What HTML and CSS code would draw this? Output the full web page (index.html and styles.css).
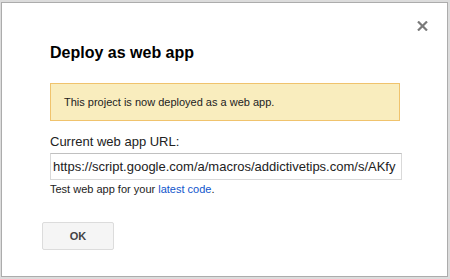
FILE: index.html
```html
<!doctype html>
<html lang="en">
  <head>
    <meta charset="UTF-8" />
    <meta name="viewport" content="width=device-width, initial-scale=1.0" />
    <title>Deploy as web app</title>
    <link rel="stylesheet" href="styles.css">
  </head>
  <body>
    <div class="dialog">
      <button class="close" title="Close">
        <svg width="11" height="10" viewBox="0 0 11 10">
          <path d="M1 0.5 L10 9.5 M10 0.5 L1 9.5" stroke="#7a7a7a" stroke-width="2.2" fill="none" />
        </svg>
      </button>

      <div class="dialog-body">
        <h1 class="title">Deploy as web app</h1>

        <div class="notice">This project is now deployed as a web app.</div>

        <label class="label" for="appUrl">Current web app URL:</label>
        <input type="text" id="appUrl" class="url" value="https://script.google.com/a/macros/addictivetips.com/s/AKfy" readonly />

        <div class="hint">Test web app for your <a href="#">latest code</a>.</div>
      </div>

      <div class="dialog-buttons">
        <button class="btn">OK</button>
      </div>
    </div>
  </body>
</html>
```

FILE: styles.css
```css
html,
body {
  margin: 0;
  height: 100%;
}

body {
  padding: 2px 2px 2px 1px;
  box-sizing: border-box;
  background-color: #dcdcdc;
  font-family: "Liberation Sans", Arial, sans-serif;
  color: #222;
}

.dialog {
  position: relative;
  box-sizing: border-box;
  width: 447px;
  height: 275px;
  background-color: #fff;
  border: 1px solid #acacac;
  padding-top: 40px;
}

.close {
  position: absolute;
  top: 18px;
  left: 415px;
  width: 11px;
  height: 10px;
  padding: 0;
  border: none;
  background: none;
  cursor: pointer;
}

.close svg {
  display: block;
}

.dialog-body {
  padding: 0 46px 0 48px;
}

.title {
  margin: 0;
  font-size: 16px;
  line-height: 20px;
  font-weight: bold;
  color: #000;
}

.notice {
  box-sizing: border-box;
  width: 350px;
  height: 38px;
  margin-top: 20px;
  padding: 0 13px;
  background-color: #f9edbe;
  border: 1px solid #f0c36d;
  font-size: 11px;
  line-height: 36px;
  color: #222;
}

.label {
  display: block;
  margin-top: 13px;
  font-size: 13px;
  line-height: 16px;
  color: #222;
}

.url {
  display: block;
  box-sizing: border-box;
  width: 352px;
  height: 27px;
  margin-top: 3px;
  padding: 0 0 0 2px;
  border: 1px solid #d9d9d9;
  border-top-color: #c0c0c0;
  font-family: "Liberation Sans", Arial, sans-serif;
  font-size: 13px;
  color: #222;
  outline: none;
}

.hint {
  margin-top: 2px;
  font-size: 11px;
  line-height: 14px;
  color: #222;
}

.hint a {
  color: #15c;
  text-decoration: none;
}

.dialog-buttons {
  padding: 26px 40px 0;
}

.btn {
  box-sizing: border-box;
  width: 72px;
  height: 28px;
  padding: 0;
  background-color: #f5f5f5;
  border: 1px solid #dcdcdc;
  border-radius: 2px;
  font-family: "Liberation Sans", Arial, sans-serif;
  font-size: 11px;
  font-weight: bold;
  color: #444;
  cursor: pointer;
}
```
